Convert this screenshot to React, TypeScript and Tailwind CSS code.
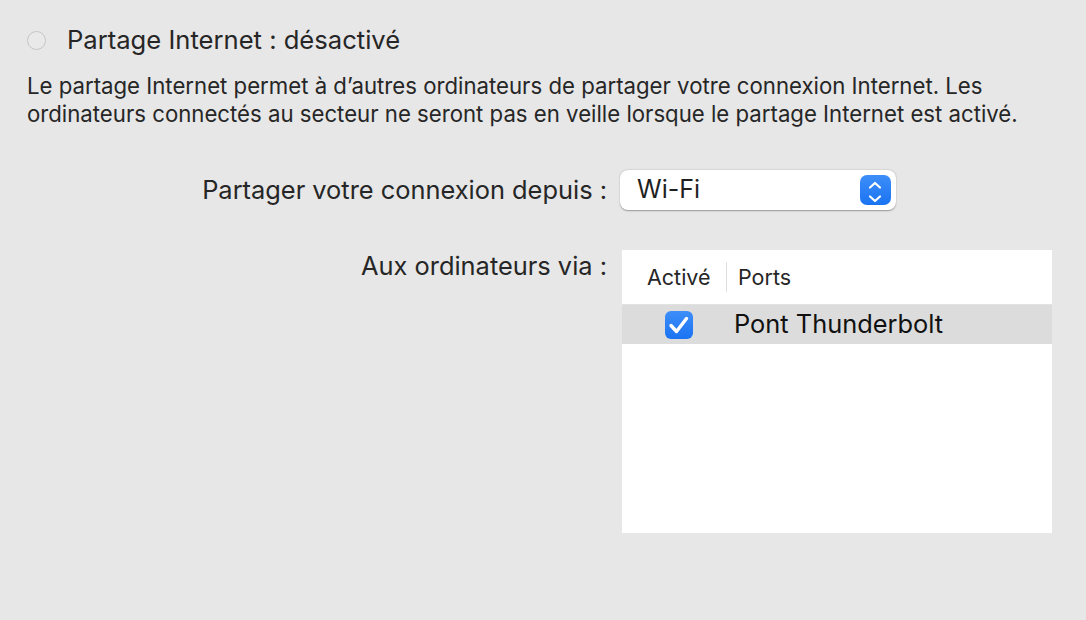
import React from "react";

export default function App() {
  return (
    <div className="w-[1086px] h-[620px] bg-[#e7e7e7] text-[#262626] overflow-hidden" style={{ fontFamily: "Inter, 'Noto Sans', sans-serif" }}>
      <div className="flex items-center pl-[27px] pt-[29px]">
        <div className="w-[19px] h-[19px] rounded-full border-[1.5px] border-[#c6c6c6] bg-[#e9e9e9]" />
        <div className="ml-[21px] text-[25.6px] leading-[22px] text-[#262626]">Partage Internet : désactivé</div>
      </div>
      <div className="pl-[27px] pt-[21px] text-[22.2px] leading-[28px] text-[#262626]">
        <div>Le partage Internet permet à d’autres ordinateurs de partager votre connexion Internet. Les</div>
        <div>ordinateurs connectés au secteur ne seront pas en veille lorsque le partage Internet est activé.</div>
      </div>
      <div className="flex items-center mt-[42px]">
        <div className="w-[607px] text-right text-[25.4px] text-[#262626]">Partager votre connexion depuis :</div>
        <div className="ml-[13px] w-[276px] h-[40px] bg-white rounded-[8px] shadow-[0_0.5px_1.5px_rgba(0,0,0,0.35)] flex items-center pl-[17px] pr-[5px]">
          <div className="flex-1 text-[25px] text-[#1f1f1f]">Wi-Fi</div>
          <div className="w-[31px] h-[30px] rounded-[7px] bg-gradient-to-b from-[#3d8ef9] to-[#1a73f2]">
            <svg width="31" height="30" viewBox="0 0 31 30" fill="none" stroke="white" strokeWidth="2.2" strokeLinecap="round" strokeLinejoin="round">
              <path d="M10 12.5 L15 8 L20 12.5" />
              <path d="M10 21.5 L15 26 L20 21.5" />
            </svg>
          </div>
        </div>
      </div>
      <div className="flex items-start mt-[40px]">
        <div className="w-[607px] text-right text-[25.4px] leading-[32px] text-[#262626]">Aux ordinateurs via :</div>
        <div className="ml-[15px] w-[430px] h-[283px] bg-white">
          <div className="h-[55px] flex items-center border-b border-[#e2e2e2]">
            <div className="w-[104px] pl-[25px] text-[21.5px] text-[#262626]">Activé</div>
            <div className="w-px h-[30px] bg-[#dedede]" />
            <div className="pl-[11px] text-[21.5px] text-[#262626]">Ports</div>
          </div>
          <div className="h-[39px] bg-[#dcdcdc] flex items-center">
            <div className="ml-[43px] w-[28px] h-[28px] rounded-[6px] bg-gradient-to-b from-[#3d8ef9] to-[#1a73f2]">
              <svg width="28" height="28" viewBox="0 0 28 28" fill="none" stroke="white" strokeWidth="3.4" strokeLinecap="round" strokeLinejoin="round">
                <path d="M6 14.5 L11.5 20.5 L21.5 7.5" />
              </svg>
            </div>
            <div className="ml-[41px] text-[25.4px] text-[#111]">Pont Thunderbolt</div>
          </div>
        </div>
      </div>
    </div>
  );
}
